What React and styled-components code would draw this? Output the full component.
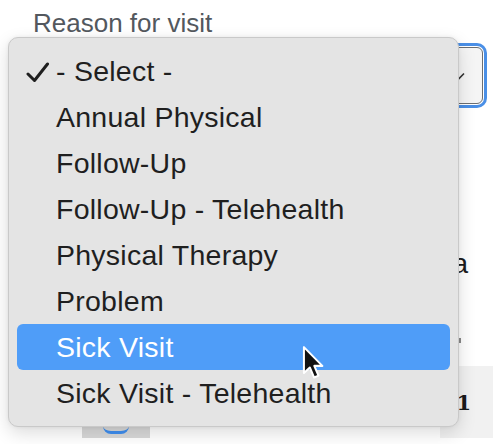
import React from "react";
import styled, { createGlobalStyle } from "styled-components";

const Global = createGlobalStyle`
  html, body { margin: 0; padding: 0; background: #ffffff; }
  body { width: 500px; height: 444px; overflow: hidden; font-family: "Liberation Sans", Arial, sans-serif; }
`;

const Page = styled.div`
  position: relative;
  width: 500px;
  height: 444px;
  overflow: hidden;
  background: #ffffff;
`;

const Form = styled.div`
  display: flex;
  flex-direction: column;
  padding: 9px 0 0 33px;
  width: 450px;
`;

const Label = styled.label`
  font-size: 26px;
  line-height: 29px;
  color: #53585e;
`;

const Select = styled.div`
  margin-top: 9px;
  height: 55px;
  border: 1px solid #6b6e72;
  border-radius: 6px;
  background: #f5f5f5;
  box-shadow: 0 0 0 1px #ffffff, 0 0 0 4px #4a8fe6;
  display: flex;
  align-items: center;
  justify-content: flex-end;
  padding-right: 17px;
`;

const Chevron = styled.svg`
  width: 12px;
  height: 8px;
`;

const Lower = styled.div`
  display: grid;
  grid-template-columns: 1fr 34px;
  margin-top: 145px;
  width: 460px;
`;

const Line = styled.div`
  grid-column: 1 / 3;
  text-align: right;
  padding-right: 25px;
  font-family: "Liberation Sans", Arial, sans-serif;
  font-size: 28px;
  line-height: 30px;
  color: #1c1c1c;
`;

const Tick = styled.div`
  grid-column: 1 / 3;
  justify-self: end;
  margin: 59px 32px 0 0;
  width: 2px;
  height: 5px;
  background: #8a8a8a;
`;

const Bottom = styled.div`
  grid-column: 1 / 3;
  display: flex;
  align-items: flex-end;
  justify-content: space-between;
  margin-top: 23px;
  margin-left: 49px;
`;

const AvatarCard = styled.div`
  width: 68px;
  height: 12px;
  background: #d9d9d9;
  display: flex;
  justify-content: center;
`;

const AvatarDot = styled.div`
  width: 26px;
  height: 5px;
  border-bottom: 3px solid #3f8ff0;
  border-radius: 0 0 13px 13px;
`;

const CountBox = styled.div`
  width: 53px;
  height: 72px;
  background: #f1f1f1;
  display: flex;
  align-items: center;
  justify-content: flex-end;
  padding-right: 22px;
  box-sizing: border-box;
  font-family: "DejaVu Serif", serif;
  font-weight: 700;
  font-size: 21px;
  color: #1a1a1a;
`;

const Menu = styled.div`
  position: absolute;
  left: 8px;
  top: 37px;
  width: 449px;
  padding: 10px 0 10px;
  background: #e4e4e4;
  border: 1px solid #c9c9c9;
  border-radius: 10px;
  box-shadow: 0 6px 18px rgba(0, 0, 0, 0.14), 0 0 4px rgba(0, 0, 0, 0.06);
  display: flex;
  flex-direction: column;
`;

const Option = styled.div`
  position: relative;
  height: 46px;
  margin: 0 8px;
  padding-left: 39px;
  border-radius: 6px;
  display: flex;
  align-items: center;
  font-size: 28.5px;
  letter-spacing: 0.25px;
  color: ${(p) => (p.$active ? "#ffffff" : "#1f1f1f")};
  background: ${(p) => (p.$active ? "#4f9df8" : "transparent")};
  white-space: nowrap;
`;

const Check = styled.svg`
  position: absolute;
  left: 9px;
  top: 13px;
  width: 24px;
  height: 22px;
`;

const Cursor = styled.svg`
  position: absolute;
  left: 301px;
  top: 345px;
  width: 26px;
  height: 36px;
`;

const options = [
  "- Select -",
  "Annual Physical",
  "Follow-Up",
  "Follow-Up - Telehealth",
  "Physical Therapy",
  "Problem",
  "Sick Visit",
  "Sick Visit - Telehealth",
];

export default function App() {
  return (
    <Page>
      <Global />
      <Form>
        <Label>Reason for visit</Label>
        <Select>
          <Chevron viewBox="0 0 12 8">
            <path d="M1 1.5 L6 6.5 L11 1.5" fill="none" stroke="#333" strokeWidth="1.6" />
          </Chevron>
        </Select>
        <Lower>
          <Line>a</Line>
          <Tick />
          <Bottom>
            <AvatarCard>
              <AvatarDot />
            </AvatarCard>
            <CountBox>1</CountBox>
          </Bottom>
        </Lower>
      </Form>

      <Menu>
        {options.map((o, i) => (
          <Option key={o} $active={o === "Sick Visit"}>
            {i === 0 && (
              <Check viewBox="0 0 24 22">
                <path
                  d="M2 13 L8.5 19.5 L21.5 3"
                  fill="none"
                  stroke="#1f1f1f"
                  strokeWidth="3"
                  strokeLinecap="round"
                  strokeLinejoin="round"
                />
              </Check>
            )}
            {o}
          </Option>
        ))}
      </Menu>

      <Cursor viewBox="0 0 17 25">
        <path
          d="M1.5 1.5 L1.5 19.5 L5.6 15.6 L8.6 22.6 L11.6 21.3 L8.7 14.5 L14.3 14.5 Z"
          fill="#111"
          stroke="#fff"
          strokeWidth="1.4"
          strokeLinejoin="round"
        />
      </Cursor>
    </Page>
  );
}
